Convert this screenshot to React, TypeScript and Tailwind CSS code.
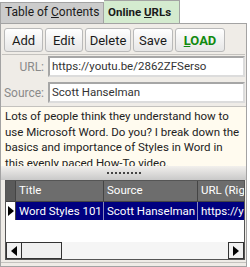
export default function App() {
  const buttons = ['Add', 'Edit', 'Delete', 'Save'];
  const widths = ['w-[39px]', 'w-[38px]', 'w-[46px]', 'w-[40px]'];

  return (
    <div className="w-[250px] h-[267px] bg-white overflow-hidden font-['Roboto',sans-serif] text-[#1a1a1a]">
      {/* Tabs */}
      <div className="flex items-end h-[23px]">
        <div className="h-[21px] w-[104px] bg-[#cccccc] border border-b-0 border-[#a3a3a3] text-[12px] leading-[19px] pl-[4px] whitespace-nowrap">
          Table of <span className="underline">C</span>ontents
        </div>
        <div className="h-[23px] w-[76px] bg-[#d4ebcf] border border-b-0 border-l-0 border-[#a3a3a3] text-[11.5px] font-bold leading-[23px] pl-[4px] whitespace-nowrap">
          Online <span className="underline">U</span>RLs
        </div>
      </div>

      {/* Panel */}
      <div className="w-[247px] h-[244px] border border-[#a3a3a3] bg-[#efece7] flex flex-col">
        <div className="flex gap-[2px] pl-[3px] pt-[4px] h-[29px]">
          {buttons.map((b, i) => (
            <button
              key={b}
              className={`${widths[i]} h-[24px] rounded-[3px] border border-[#b9b9b9] bg-gradient-to-b from-white to-[#e6e6e6] text-[13px] leading-none text-[#1a1a1a]`}
            >
              {b}
            </button>
          ))}
          <button className="w-[50px] h-[24px] rounded-[3px] border border-[#b9b9b9] bg-gradient-to-b from-white to-[#e6e6e6] text-[13px] font-bold leading-none text-[#108a10]">
            <span className="underline">L</span>OAD
          </button>
        </div>

        {/* Fields */}
        <div className="mt-[1px] border-t border-[#c4c2be] mx-[1px] flex flex-col gap-[5px] pt-[1px]">
          <div className="flex items-center h-[21px]">
            <span className="w-[44px] text-right text-[12px] text-[#8a8a8a] pr-[2px]">URL:</span>
            <div className="ml-[2px] w-[197px] h-[21px] bg-white border-2 border-t-[#a6a6a6] border-l-[#a6a6a6] border-b-[#dcdcdc] border-r-[#dcdcdc] text-[11.5px] leading-[17px] pl-[2px] text-[#333] whitespace-nowrap overflow-hidden">
              https://youtu.be/2862ZFSerso
            </div>
          </div>
          <div className="flex items-center h-[21px]">
            <span className="w-[44px] text-right text-[12px] text-[#8a8a8a] pr-[2px]">Source:</span>
            <div className="ml-[2px] w-[197px] h-[21px] bg-white border-2 border-t-[#a6a6a6] border-l-[#a6a6a6] border-b-[#dcdcdc] border-r-[#dcdcdc] text-[11.5px] leading-[17px] pl-[2px] text-[#333] whitespace-nowrap overflow-hidden">
              Scott Hanselman
            </div>
          </div>
        </div>

        {/* Description */}
        <div className="mt-[3px] h-[60px] bg-[#fffbef] border-t border-[#c4c2be] pl-[4px] pt-[2px] text-[11.5px] leading-[15.5px] text-[#222] overflow-hidden whitespace-nowrap">
          <div>Lots of people think they understand how to</div>
          <div>use Microsoft Word. Do you? I break down the</div>
          <div>basics and importance of Styles in Word in</div>
          <div>this evenly paced How-To video.</div>
        </div>

        {/* Splitter */}
        <div className="h-[14px] bg-gradient-to-b from-[#f2f0ed] to-[#c9c9c9] flex justify-center items-center">
          <div className="w-[34px] border-t-2 border-dotted border-[#444]" />
        </div>

        {/* Grid */}
        <div className="ml-[4px] w-[240px] h-[80px] border border-[#555] bg-white flex flex-col overflow-hidden">
          <div className="flex h-[20px] bg-[#6d6d6d] text-white text-[11.5px] leading-[19px] shrink-0">
            <div className="w-[10px] bg-[#5a5a5a] border-r border-[#444]" />
            <div className="w-[88px] border-r border-[#444] pl-[3px]">Title</div>
            <div className="w-[94px] border-r border-[#444] pl-[3px]">Source</div>
            <div className="flex-1 pl-[3px] whitespace-nowrap overflow-hidden">URL (Right-click)</div>
          </div>
          <div className="flex h-[19px] bg-[#000080] text-white text-[11.5px] leading-[18px] shrink-0 border-t border-[#444]">
            <div className="w-[10px] bg-white border-r border-[#444] flex items-center justify-center">
              <svg width="6" height="10" viewBox="0 0 6 10"><path d="M0 0 L6 5 L0 10 Z" fill="#000" /></svg>
            </div>
            <div className="w-[88px] border-r border-[#8888bb] pl-[3px] whitespace-nowrap overflow-hidden">Word Styles 101</div>
            <div className="w-[94px] border-r border-[#8888bb] pl-[3px] whitespace-nowrap overflow-hidden">Scott Hanselman</div>
            <div className="flex-1 pl-[3px] whitespace-nowrap overflow-hidden">https://youtu.be/2862ZFSerso</div>
          </div>
          <div className="flex-1" />
          <div className="flex h-[17px] shrink-0">
            <div className="w-[16px] bg-[#f0f0f0] border border-[#333] flex items-center justify-center">
              <svg width="6" height="10" viewBox="0 0 6 10"><path d="M6 0 L0 5 L6 10 Z" fill="#000" /></svg>
            </div>
            <div className="w-[40px] bg-[#f0f0f0] border border-[#333] border-l-0" />
            <div className="flex-1 bg-[#f5f5f5]" />
            <div className="w-[16px] bg-[#f0f0f0] border border-[#333] flex items-center justify-center">
              <svg width="6" height="10" viewBox="0 0 6 10"><path d="M0 0 L6 5 L0 10 Z" fill="#000" /></svg>
            </div>
          </div>
        </div>
        <div className="mt-[2px] border-t border-[#c4c2be]" />
      </div>
    </div>
  );
}
